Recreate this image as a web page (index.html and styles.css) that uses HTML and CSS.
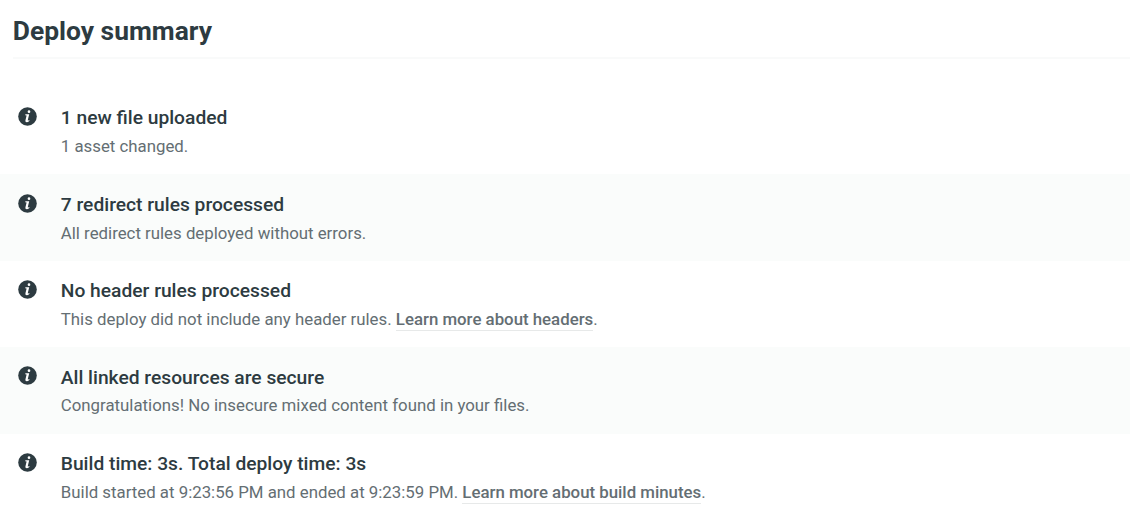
FILE: index.html
```html
<!DOCTYPE html>
<html lang="en">
<head>
<meta charset="utf-8">
<title>Deploy summary</title>
<link rel="stylesheet" href="styles.css">
</head>
<body>
<svg class="sprite" aria-hidden="true"><symbol id="info" viewBox="0 0 19 19"><circle cx="9.5" cy="9.5" r="9.3"/><circle class="mark" cx="11" cy="4.7" r="1.35"/><path class="mark" d="M7.4 7.3h3.8l-1.4 5.8q-.1.6.4.5l1.3-.5-.2.9q-1.3 1.2-2.6 1.2-1.7 0-1.3-1.7l1.2-4.9-1.4-.4z"/></symbol></svg>
<main class="summary">
<h1 class="title">Deploy summary</h1>
<ul class="list">
<li class="item"><svg class="icon"><use href="#info"/></svg><div><h2 class="heading">1 new file uploaded</h2><p class="detail">1 asset changed.</p></div></li>
<li class="item"><svg class="icon"><use href="#info"/></svg><div><h2 class="heading">7 redirect rules processed</h2><p class="detail">All redirect rules deployed without errors.</p></div></li>
<li class="item"><svg class="icon"><use href="#info"/></svg><div><h2 class="heading">No header rules processed</h2><p class="detail">This deploy did not include any header rules. <a class="link" href="#">Learn more about headers</a>.</p></div></li>
<li class="item"><svg class="icon"><use href="#info"/></svg><div><h2 class="heading">All linked resources are secure</h2><p class="detail">Congratulations! No insecure mixed content found in your files.</p></div></li>
<li class="item"><svg class="icon"><use href="#info"/></svg><div><h2 class="heading">Build time: 3s. Total deploy time: 3s</h2><p class="detail">Build started at 9:23:56 PM and ended at 9:23:59 PM. <a class="link" href="#">Learn more about build minutes</a>.</p></div></li>
</ul>
</main>
</body>
</html>
```
FILE: styles.css
```css
* { box-sizing: border-box; }
body { margin: 0; background: #fff; font-family: Roboto, sans-serif; color: #2d3b41; overflow: hidden; }
.sprite { display: none; }
.title { margin: 0 0 0 12.8px; height: 59px; padding-top: 15px; border-bottom: 2px solid #f9fafa; font-size: 26.4px; line-height: 32px; font-weight: 700; }
.list { list-style: none; margin: 0; padding: 29px 0 0; }
.item { display: flex; height: 86.4px; padding: 17.4px 0 0 18px; }
.item:nth-child(even) { background: #fafcfb; }
.icon { width: 19px; height: 19px; margin: 1.8px 23.8px 0 0; flex: none; fill: #2d3b41; }
.mark { fill: #fff; }
.heading { margin: 0; font-size: 19.23px; line-height: 26px; font-weight: 500; }
.detail { margin: 2.8px 0 0; font-size: 16.82px; line-height: 25px; color: #646e73; }
.link { padding-bottom: 1px; color: inherit; font-weight: 500; text-decoration: none; border-bottom: 1px solid #e7e9e9; }
```
